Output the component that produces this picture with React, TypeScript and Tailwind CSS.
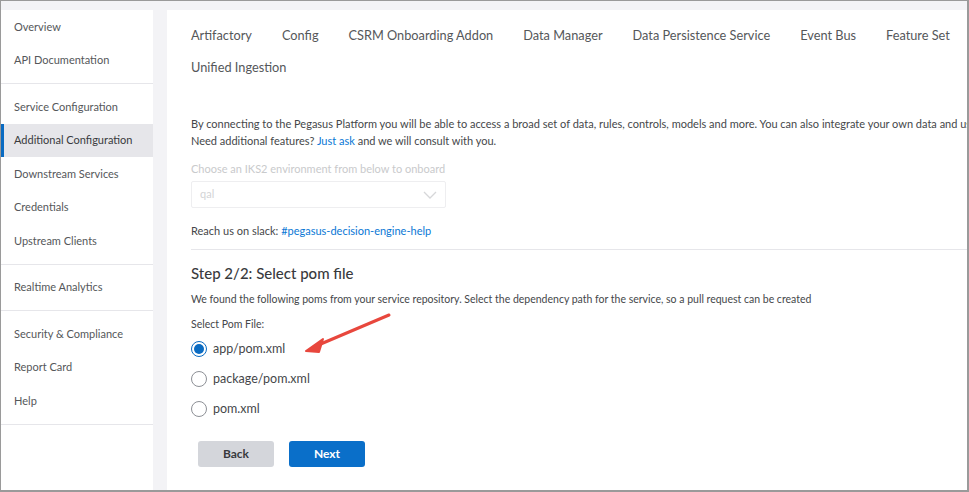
import React from "react";

const groups: string[][] = [
  ["Overview", "API Documentation"],
  ["Service Configuration", "Additional Configuration", "Downstream Services", "Credentials", "Upstream Clients"],
  ["Realtime Analytics"],
  ["Security & Compliance", "Report Card", "Help"],
];

const tabs = [
  "Artifactory",
  "Config",
  "CSRM Onboarding Addon",
  "Data Manager",
  "Data Persistence Service",
  "Event Bus",
  "Feature Set",
  "Unified Ingestion",
];

const poms = ["app/pom.xml", "package/pom.xml", "pom.xml"];

function Sidebar() {
  return (
    <div className="w-[152px] shrink-0 bg-white flex flex-col">
      {groups.map((g, gi) => (
        <div key={gi} className={`border-b border-[#e6e6ea] pb-[6px] ${gi === 0 ? "" : "pt-[6px]"}`}>
          {g.map((item) => {
            const active = item === "Additional Configuration";
            return (
              <div
                key={item}
                className={`h-[33.5px] flex items-center text-[11px] ${
                  active ? "bg-[#e6e6ea] border-l-[3px] border-[#0a6bc2] pl-[10px] text-[#393a3d]" : "pl-[13px] text-[#55575a]"
                }`}
              >
                {item}
              </div>
            );
          })}
        </div>
      ))}
    </div>
  );
}

function Radio({ checked, label }: { checked: boolean; label: string }) {
  return (
    <div className="h-[30px] flex items-center gap-[6px]">
      <span
        className={`w-[16px] h-[16px] rounded-full border flex items-center justify-center bg-white ${
          checked ? "border-[#0a6bc2]" : "border-[#8d9096]"
        }`}
      >
        {checked && <span className="w-[10px] h-[10px] rounded-full bg-[#0a6bc2]" />}
      </span>
      <span className="text-[12.5px] text-[#45474a]">{label}</span>
    </div>
  );
}

export default function App() {
  return (
    <div
      className="w-[969px] h-[492px] border border-[#9a9a9a] border-r-2 border-b-2 bg-[#f3f3f6] flex pt-[9px] overflow-hidden relative"
      style={{ fontFamily: "Lato, 'Noto Sans', sans-serif" }}
    >
      <Sidebar />
      <div className="flex-1 ml-[14px] bg-white pl-[24px] pt-[10px] overflow-hidden">
        <div className="flex flex-wrap gap-x-[30px] w-[780px]">
          {tabs.map((t) => (
            <div key={t} className="h-[32px] flex items-center text-[12.75px] text-[#55575a] whitespace-nowrap">
              {t}
            </div>
          ))}
        </div>

        <div className="mt-[31px] text-[11px] leading-[17px] text-[#45474a] whitespace-nowrap">
          <div>
            By connecting to the Pegasus Platform you will be able to access a broad set of data, rules, controls, models
            and more. You can also integrate your own data and use it for your decisions.
          </div>
          <div>
            Need additional features? <span className="text-[#0a77d5]">Just ask</span> and we will consult with you.
          </div>
        </div>

        <div className="mt-[12px] text-[11px] leading-[16px] text-[#c9cacc]">Choose an IKS2 environment from below to onboard</div>
        <div className="mt-[4px] w-[255px] h-[27px] border border-[#eeeef0] rounded-[2px] flex items-center justify-between px-[8px] text-[11px] text-[#d3d4d6]">
          <span>qal</span>
          <svg width="14" height="8" viewBox="0 0 14 8" fill="none">
            <path d="M1 1l6 6 6-6" stroke="#d6d7d9" strokeWidth="1.3" />
          </svg>
        </div>

        <div className="mt-[15px] text-[11px] leading-[16px] text-[#45474a]">
          Reach us on slack: <span className="text-[#0a77d5]">#pegasus-decision-engine-help</span>
        </div>

        <div className="mt-[10px] border-t border-[#e6e6ea]" />

        <div className="mt-[13px] text-[15px] leading-[20px] font-medium text-[#393a3d]">Step 2/2: Select pom file</div>
        <div className="mt-[8px] text-[10.5px] leading-[16px] text-[#45474a] whitespace-nowrap">
          We found the following poms from your service repository. Select the dependency path for the service, so a pull
          request can be created
        </div>
        <div className="mt-[9px] text-[10.5px] leading-[16px] text-[#45474a]">Select Pom File:</div>
        <div className="mt-[2px] flex flex-col">
          {poms.map((p, i) => (
            <Radio key={p} checked={i === 0} label={p} />
          ))}
        </div>

        <div className="mt-[17px] ml-[7px] flex gap-[15px]">
          <button className="w-[76px] h-[26px] rounded-[3px] bg-[#d4d6db] text-[12px] font-bold text-[#393a3d]">Back</button>
          <button className="w-[76px] h-[26px] rounded-[3px] bg-[#0a6fc9] text-[12px] font-bold text-white">Next</button>
        </div>
      </div>

      <svg className="absolute left-[295px] top-[305px]" width="110" height="55" viewBox="0 0 110 55" fill="none">
        <path d="M93 9L20 40" stroke="#e8473d" strokeWidth="3" strokeLinecap="round" />
        <path d="M10 45L27 33L23 46Z" fill="#e8473d" stroke="#e8473d" strokeWidth="2" strokeLinejoin="round" />
      </svg>
    </div>
  );
}
